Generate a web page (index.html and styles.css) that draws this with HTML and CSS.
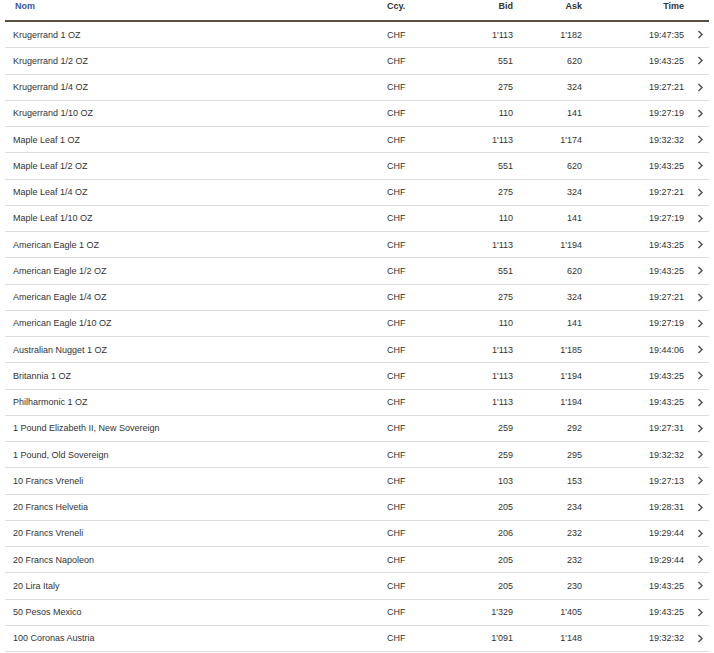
FILE: index.html
```html
<!DOCTYPE html>
<html>
<head>
<meta charset="utf-8">
<link rel="stylesheet" href="styles.css">
</head>
<body>
<div class="table">
  <div class="row head">
    <div class="c name sorted">Nom</div>
    <div class="c ccy">Ccy.</div>
    <div class="c num">Bid</div>
    <div class="c num">Ask</div>
    <div class="c num">Time</div>
    <div class="c go"></div>
  </div>
</div>
<script src="app.js"></script>
</body>
</html>
```
FILE: app.js
```js
const rows = [
["Krugerrand 1 OZ","1'113","1'182","19:47:35"],
["Krugerrand 1/2 OZ","551","620","19:43:25"],
["Krugerrand 1/4 OZ","275","324","19:27:21"],
["Krugerrand 1/10 OZ","110","141","19:27:19"],
["Maple Leaf 1 OZ","1'113","1'174","19:32:32"],
["Maple Leaf 1/2 OZ","551","620","19:43:25"],
["Maple Leaf 1/4 OZ","275","324","19:27:21"],
["Maple Leaf 1/10 OZ","110","141","19:27:19"],
["American Eagle 1 OZ","1'113","1'194","19:43:25"],
["American Eagle 1/2 OZ","551","620","19:43:25"],
["American Eagle 1/4 OZ","275","324","19:27:21"],
["American Eagle 1/10 OZ","110","141","19:27:19"],
["Australian Nugget 1 OZ","1'113","1'185","19:44:06"],
["Britannia 1 OZ","1'113","1'194","19:43:25"],
["Philharmonic 1 OZ","1'113","1'194","19:43:25"],
["1 Pound Elizabeth II, New Sovereign","259","292","19:27:31"],
["1 Pound, Old Sovereign","259","295","19:32:32"],
["10 Francs Vreneli","103","153","19:27:13"],
["20 Francs Helvetia","205","234","19:28:31"],
["20 Francs Vreneli","206","232","19:29:44"],
["20 Francs Napoleon","205","232","19:29:44"],
["20 Lira Italy","205","230","19:43:25"],
["50 Pesos Mexico","1'329","1'405","19:43:25"],
["100 Coronas Austria","1'091","1'148","19:32:32"]
];
const table = document.querySelector('.table');
const chev = '<svg width="7" height="9" viewBox="0 0 7 9"><path d="M1.5 1 L5 4.5 L1.5 8" fill="none" stroke="#555" stroke-width="1.5"/></svg>';
for (const r of rows) {
  const d = document.createElement('div');
  d.className = 'row';
  d.innerHTML = `<div class="c name">${r[0]}</div><div class="c ccy">CHF</div><div class="c num">${r[1]}</div><div class="c num">${r[2]}</div><div class="c num">${r[3]}</div><div class="c go">${chev}</div>`;
  table.appendChild(d);
}
```
FILE: styles.css
```css
html, body {
  margin: 0;
  padding: 0;
  background: #fff;
}
body {
  font-family: "Liberation Sans", Arial, sans-serif;
  font-size: 9px;
  color: #333;
}
.table {
  margin: 0 5px;
  width: 704px;
}
.row {
  display: grid;
  grid-template-columns: 374px 71px 71px 69px 102px 17px;
  align-items: center;
  height: 25.25px;
  border-bottom: 1px solid #ddd;
}
.row.head {
  height: 20px;
  align-items: start;
  border-bottom: 2px solid #5a5041;
  font-weight: bold;
  line-height: 13px;
}
.c {
  white-space: nowrap;
}
.name {
  padding-left: 8px;
}
.head .name {
  padding-left: 10px;
}
.ccy {
  padding-left: 8px;
}
.num {
  text-align: right;
  padding-right: 8px;
}
.sorted {
  color: #3b5998;
}
.go {
  display: flex;
  justify-content: center;
  align-items: center;
}
.go svg {
  display: block;
}
```
